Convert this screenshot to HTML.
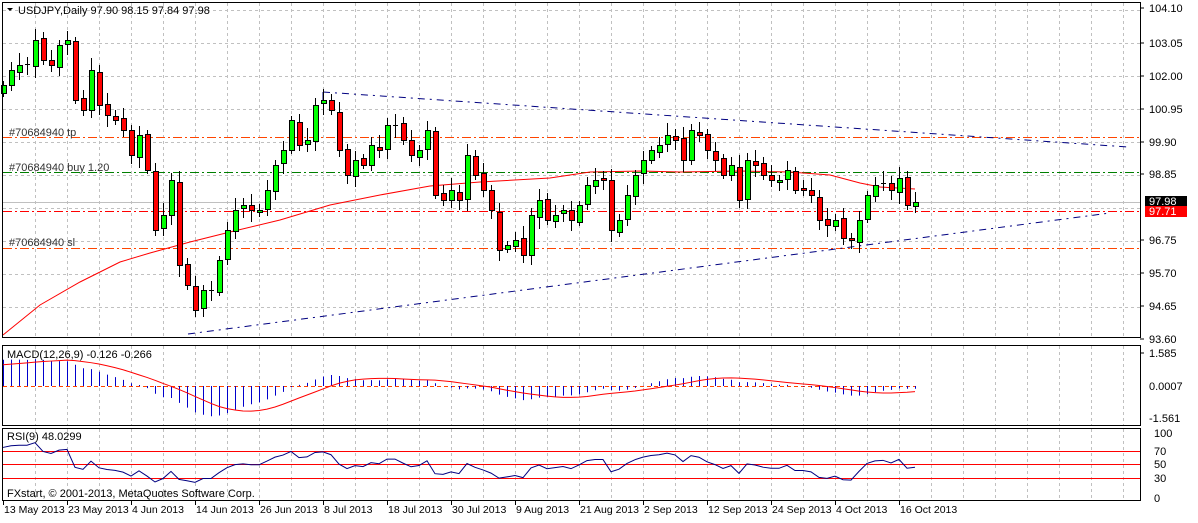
<!DOCTYPE html>
<html><head><meta charset="utf-8"><style>
html,body{margin:0;padding:0;background:#fff;}
body{width:1198px;height:518px;overflow:hidden;font-family:"Liberation Sans",sans-serif;}
svg text{font-family:"Liberation Sans",sans-serif;font-size:11px;}
svg text.d{font-size:10.5px;}
</style></head><body>
<svg id="c" width="1198" height="518" xmlns="http://www.w3.org/2000/svg">
<rect x="0" y="0" width="1198" height="518" fill="#fff"/>
<g id="grid" stroke="#c0c0c0" stroke-dasharray="3,3" stroke-width="1"></g>
<g id="lines"></g>
<g id="cand"></g>
<g id="ind"></g>
<rect x="2.5" y="2.5" width="1138" height="335" fill="none" stroke="#000"/>
<rect x="2.5" y="345.5" width="1138" height="80" fill="none" stroke="#000"/>
<rect x="2.5" y="428.5" width="1138" height="72" fill="none" stroke="#000"/>
<g id="txt" fill="#000"></g>
<path d="M7 8 L13 8 L10 11 Z" fill="#000"/>
<text x="18" y="14">USDJPY,Daily  97.90 98.15 97.84 97.98</text>
<text x="9" y="136" fill="#333">#70684940 tp</text>
<text x="9" y="171" fill="#333">#70684940 buy 1.20</text>
<text x="9" y="246" fill="#333">#70684940 sl</text>
<text x="7" y="358">MACD(12,26,9) -0.126 -0.266</text>
<text x="7" y="440">RSI(9) 48.0299</text>
<text x="7" y="497">FXstart, © 2001-2013, MetaQuotes Software Corp.</text>
</svg>
<script>
const NS="http://www.w3.org/2000/svg";
function el(p,t,a,txt){const e=document.createElementNS(NS,t);for(const k in a)e.setAttribute(k,a[k]);if(txt!=null)e.textContent=txt;document.getElementById(p).appendChild(e);return e;}
for(let x=35;x<1140;x+=32){el('grid','line',{x1:x+.5,y1:3,x2:x+.5,y2:337});el('grid','line',{x1:x+.5,y1:346,x2:x+.5,y2:425});el('grid','line',{x1:x+.5,y1:429,x2:x+.5,y2:500});}
[10,43,76,109,142,175,208,241,274,307].forEach(y=>el('grid','line',{x1:3,y1:y+.5,x2:1140,y2:y+.5}));
const pl=[[104.10,8],[103.05,43],[102.00,76],[100.95,109],[99.90,142],[98.85,174],[96.75,240],[95.70,273],[94.65,306],[93.60,339]];
pl.forEach(([p,y])=>{el('txt','line',{x1:1140,y1:y,x2:1144,y2:y,stroke:'#000'});el('txt','text',{x:1149,y:y+4},p.toFixed(2));});
el('txt','line',{x1:1140,y1:353,x2:1144,y2:353,stroke:'#000'});el('txt','text',{x:1149,y:357},'1.585');
el('txt','text',{x:1149,y:390},'0.0007');el('txt','text',{x:1149,y:422},'-1.561');
[[100,433],[70,451],[50,464],[30,478],[0,498]].forEach(([v,y])=>el('txt','text',{x:1154,y:y+4},v));
el('txt','rect',{x:1145,y:196,width:42,height:11,fill:'#000'});el('txt','text',{x:1149,y:205,fill:'#fff'},'97.98');
el('txt','rect',{x:1145,y:206,width:42,height:11,fill:'#f00'});el('txt','text',{x:1149,y:215,fill:'#fff'},'97.71');
const ds=["13 May 2013","23 May 2013","4 Jun 2013","14 Jun 2013","26 Jun 2013","8 Jul 2013","18 Jul 2013","30 Jul 2013","9 Aug 2013","21 Aug 2013","2 Sep 2013","12 Sep 2013","24 Sep 2013","4 Oct 2013","16 Oct 2013"];
ds.forEach((d,i)=>{const x=3+64*i;el('txt','line',{x1:x+.5,y1:501,x2:x+.5,y2:505,stroke:'#000'});el('txt','text',{x:x+1,y:513,class:'d'},d);});
function hl(y,c,da,x2){el('lines','line',{x1:3,y1:y+.5,x2:x2||1140,y2:y+.5,stroke:c,'stroke-dasharray':da});}
hl(202,'#c0c0c0','');hl(137,'#ff4500','9,3,2,3');hl(172,'#008000','9,3,2,3');hl(248,'#ff4500','9,3,2,3');hl(211,'#ff0000','9,3,2,3');
el('lines','line',{x1:323,y1:92,x2:1128,y2:147,stroke:'#000080','stroke-dasharray':'7,5,2,5'});
el('lines','path',{d:'M323 102V92',stroke:'#000080',fill:'none'});
el('lines','line',{x1:188,y1:334,x2:1110,y2:213,stroke:'#000080','stroke-dasharray':'7,5,2,5'});
el('lines','polyline',{points:'3,335 40,305 80,282 120,262 150,253 190,242 230,232 280,220 330,205 380,195 430,186 480,182 550,178 590,172 640,171 680,172 740,171 790,172 830,175 860,183 880,187 915,189',fill:'none',stroke:'#ff0000'});
const Y=[85,70,65,65,40,60,65,45,40,100,110,70,105,115,120,130,155,135,170,230,215,180,265,285,310,290,290,260,230,210,205,210,210,190,165,150,120,145,140,105,100,110,150,175,160,165,145,150,125,125,140,155,150,130,195,200,190,200,155,175,190,210,250,245,240,255,215,200,220,215,210,220,205,185,180,180,230,220,195,175,160,150,145,135,140,160,130,135,150,160,175,165,200,160,165,175,180,180,170,190,190,195,220,225,220,238,240,220,195,185,183,190,178,205,202];
let prev=95;
Y.forEach((c,i)=>{const x=3+8*i;let o=(i==0?95:prev)+((i*7)%5-2);const top=Math.min(o,c),bot=Math.max(o,c);
const hi=top-4-(i*13)%9,lo=bot+4+(i*11)%9;
el('cand','line',{x1:x+.5,y1:hi,x2:x+.5,y2:lo,stroke:'#000'});
const h=Math.max(bot-top,1);
if(h<2)el('cand','line',{x1:x-2,y1:top+.5,x2:x+3,y2:top+.5,stroke:'#000'});
else el('cand','rect',{x:x-2+.5,y:top+.5,width:5,height:h,fill:c<o?'#00ff00':'#ff0000',stroke:'#000'});
prev=c;});
const P=Y.map(y=>104.10-(y-8)/31.52);
let e12=P[0]-0.9,e26=P[0]-2.2;const M=[];
P.forEach(p=>{e12+=(p-e12)*2/13;e26+=(p-e26)*2/27;M.push(e12-e26);});
const S=M.map((m,i)=>{let s=0,n=0;for(let j=Math.max(0,i-8);j<=i;j++){s+=M[j];n++;}return s/n*(n/9)+ (9-n)/9*1.0;});
el('ind','line',{x1:3,y1:386.5,x2:915,y2:386.5,stroke:'#ff4500','stroke-dasharray':'4,3'});
M.forEach((m,i)=>{const x=3+8*i+.5;el('ind','line',{x1:x,y1:386,x2:x,y2:386-m*20.6,stroke:'#0000cc'});});
el('ind','polyline',{points:S.map((s,i)=>(3+8*i)+','+(386-s*20.6)).join(' '),fill:'none',stroke:'#ff0000'});
let ag=0.35,al=0.1;const R=[];
P.forEach((p,i)=>{if(i==0){R.push(ag/(ag+al)*100);return;}const d=p-P[i-1];ag=(ag*8+Math.max(d,0))/9;al=(al*8+Math.max(-d,0))/9;R.push(ag/(ag+al)*100);});
[451,464,478].forEach(y=>el('ind','line',{x1:3,y1:y+.5,x2:1140,y2:y+.5,stroke:'#ff0000'}));
el('ind','polyline',{points:R.map((r,i)=>(3+8*i)+','+(498-r*0.65)).join(' '),fill:'none',stroke:'#000080'});
</script>
</body></html>
